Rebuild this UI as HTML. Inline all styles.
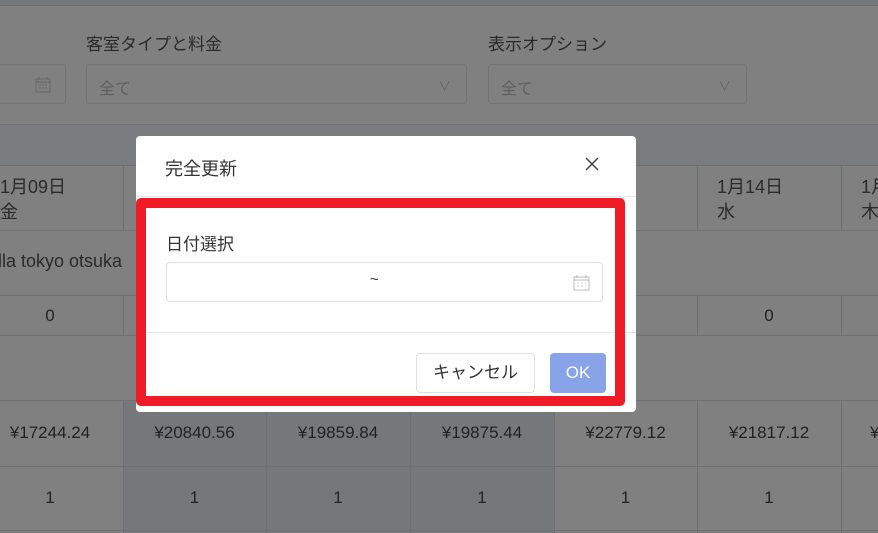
<!DOCTYPE html>
<html><head><meta charset="utf-8"><style>
*{margin:0;padding:0;box-sizing:border-box}
body{width:878px;height:533px;overflow:hidden;background:#808080;font-family:"Liberation Sans","Noto Sans CJK JP",sans-serif;position:relative;color:#222}
.a{position:absolute;white-space:nowrap}
.t{color:#2a2a2a;font-size:17px}
.hl{position:absolute;left:0;width:878px;height:1px;background:#6f7074}
.vl{position:absolute;width:1px;background:#6f7074}
.c{position:absolute;text-align:center;font-size:17px;color:#222;white-space:nowrap}
</style></head><body>
<div class="a" style="left:0;top:0;width:878px;height:6px;background:#76777b;border-bottom:1px solid #6e6f73"></div>
<div class="a t" style="left:86px;top:30px">客室タイプと料金</div>
<div class="a t" style="left:488px;top:30px">表示オプション</div>
<div class="a" style="left:-10px;top:64px;width:76px;height:40px;border:1px solid #737373;border-radius:4px"></div>
<svg class="a" style="left:35px;top:76px" width="16" height="17"><rect x="1" y="3" width="14" height="13" fill="none" stroke="#666"/><path d="M1 6H15M4 1V4M12 1V4M4 9h2M7 9h2M10 9h2M4 12h2M7 12h2M10 12h2" stroke="#666"/></svg>
<div class="a" style="left:86px;top:64px;width:381px;height:40px;border:1px solid #737373;border-radius:4px"></div>
<div class="a" style="left:99px;top:75px;font-size:16px;color:#5f5f5f">全て</div>
<div class="a" style="left:438px;top:76px;font-size:13px;color:#666">∨</div>
<div class="a" style="left:488px;top:64px;width:259px;height:40px;border:1px solid #737373;border-radius:4px"></div>
<div class="a" style="left:501px;top:75px;font-size:16px;color:#5f5f5f">全て</div>
<div class="a" style="left:718px;top:76px;font-size:13px;color:#666">∨</div>
<div class="a" style="left:0;top:124px;width:878px;height:41px;background:#7a7b7f;border-top:1px solid #6e6f73"></div>
<div class="a" style="left:123px;top:400px;width:431px;height:133px;background:#76777b"></div>
<div class="hl" style="top:165px"></div><div class="hl" style="top:230px"></div><div class="hl" style="top:295px"></div><div class="hl" style="top:335px"></div><div class="hl" style="top:400px"></div><div class="hl" style="top:466px"></div><div class="hl" style="top:530px"></div>
<div class="vl" style="left:123px;top:165px;height:65px"></div><div class="vl" style="left:697px;top:165px;height:65px"></div><div class="vl" style="left:841px;top:165px;height:65px"></div>
<div class="vl" style="left:123px;top:295px;height:40px"></div><div class="vl" style="left:697px;top:295px;height:40px"></div><div class="vl" style="left:841px;top:295px;height:40px"></div>
<div class="vl" style="left:123px;top:400px;height:133px"></div><div class="vl" style="left:266px;top:400px;height:133px"></div><div class="vl" style="left:410px;top:400px;height:133px"></div><div class="vl" style="left:554px;top:400px;height:133px"></div><div class="vl" style="left:697px;top:400px;height:133px"></div><div class="vl" style="left:841px;top:400px;height:133px"></div>
<div class="a t" style="left:0;top:175px;line-height:25px;font-size:18px">1月09日<br>金</div>
<div class="a t" style="left:717px;top:175px;line-height:25px;font-size:18px">1月14日<br>水</div>
<div class="a t" style="left:861px;top:175px;line-height:25px;font-size:18px">1月<br>木</div>
<div class="a t" style="left:-2px;top:251px;font-size:18px">lla tokyo otsuka</div>
<div class="c" style="left:-23px;width:146px;top:306px">0</div>
<div class="c" style="left:697px;width:144px;top:306px">0</div>
<div class="c" style="left:-23px;width:146px;top:423px">¥17244.24</div>
<div class="c" style="left:123px;width:143px;top:423px">¥20840.56</div>
<div class="c" style="left:266px;width:144px;top:423px">¥19859.84</div>
<div class="c" style="left:410px;width:144px;top:423px">¥19875.44</div>
<div class="c" style="left:554px;width:143px;top:423px">¥22779.12</div>
<div class="c" style="left:697px;width:144px;top:423px">¥21817.12</div>
<div class="a" style="left:870px;top:423px;font-size:17px">¥</div>
<div class="c" style="left:-23px;width:146px;top:488px">1</div>
<div class="c" style="left:123px;width:143px;top:488px">1</div>
<div class="c" style="left:266px;width:144px;top:488px">1</div>
<div class="c" style="left:410px;width:144px;top:488px">1</div>
<div class="c" style="left:554px;width:143px;top:488px">1</div>
<div class="c" style="left:697px;width:144px;top:488px">1</div>

<div class="a" style="left:136px;top:136px;width:500px;height:276px;background:#fff;border-radius:4px"></div>
<div class="a" style="left:165px;top:155px;font-size:18px;color:#333">完全更新</div>
<svg class="a" style="left:585px;top:157px" width="14" height="14"><path d="M1 1L13 13M13 1L1 13" stroke="#444" stroke-width="1.5"/></svg>
<div class="a" style="left:136px;top:196px;width:500px;height:1px;background:#e6e6e6"></div>
<div class="a" style="left:136px;top:332px;width:500px;height:1px;background:#e6e6e6"></div>
<div class="a" style="left:136px;top:198px;width:489px;height:208px;border:10px solid #ef1c27;border-radius:5px"></div>
<div class="a" style="left:166px;top:230px;font-size:17px;color:#333">日付選択</div>
<div class="a" style="left:166px;top:262px;width:437px;height:40px;border:1px solid #dcdfe6;border-radius:4px"></div>
<div class="a" style="left:370px;top:271px;font-size:15px;color:#333">~</div>
<svg class="a" style="left:573px;top:274px" width="17" height="17"><rect x="1" y="3" width="15" height="13" fill="none" stroke="#bbb"/><path d="M1 6H16M4 1V4M13 1V4" stroke="#bbb"/><path d="M4 9h2M8 9h2M12 9h1M4 12h2M8 12h2M12 12h1" stroke="#ccc"/></svg>
<div class="a" style="left:416px;top:353px;width:119px;height:40px;border:1px solid #dcdfe6;border-radius:4px;font-size:17px;color:#333;text-align:center;line-height:38px">キャンセル</div>
<div class="a" style="left:550px;top:353px;width:56px;height:40px;background:#88a3e8;border-radius:4px;font-size:17px;color:#fff;text-align:center;line-height:40px">OK</div>
</body></html>
